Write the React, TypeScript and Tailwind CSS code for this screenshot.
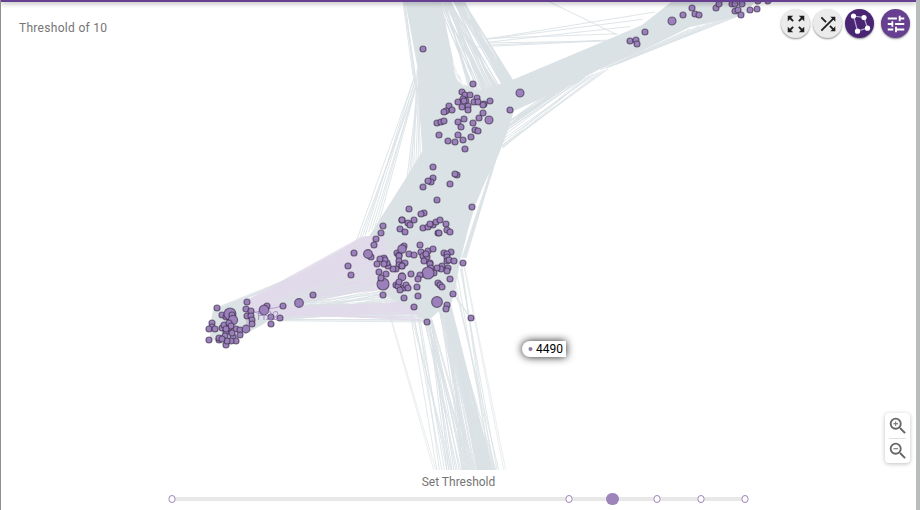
import { useState } from "react";
import type { ReactNode } from "react";
import { MdShuffle, MdTune, MdZoomIn, MdZoomOut, MdZoomOutMap } from "react-icons/md";

type Node = [x: number, y: number, r?: number];
type Point = [x: number, y: number];

interface Bundle {
  from: [Point, Point];
  to: [Point, Point];
  count: number;
  color: string;
  width?: number;
}

const GRAY = "#dbe2e5";
const LILAC = "#e1daea";

const NODES: Node[] = [
  // upper cluster
  [423, 49], [473, 84], [462, 92], [465, 95], [470, 95], [477, 98], [458, 102], [463, 99],
  [466, 101], [474, 102], [478, 102], [484, 104], [483, 105], [490, 101], [468, 106], [462, 107],
  [468, 110], [449, 106], [452, 110], [446, 111], [444, 112], [437, 123], [441, 122], [444, 121],
  [458, 122], [464, 119], [461, 127], [479, 118], [483, 113], [489, 120, 4], [473, 123], [475, 130],
  [478, 131], [439, 135], [448, 141], [455, 142], [458, 135], [463, 140], [471, 137], [465, 149],
  [520, 93, 4], [510, 110], [464, 101],
  // right arm
  [630, 41], [636, 40], [637, 44], [645, 32], [672, 21, 4], [683, 15], [692, 8], [695, 14],
  [699, 15], [716, 8], [719, 4], [732, 4], [735, 4], [742, 4], [735, 11], [738, 10], [741, 15],
  [750, 10], [757, 9], [758, 1], [768, 1],
  // neck
  [433, 167], [457, 175], [455, 174], [433, 178], [431, 182], [428, 181], [423, 187], [450, 184],
  [437, 200], [472, 207], [409, 209], [424, 213], [421, 214], [402, 220], [402, 220], [414, 220],
  [408, 223], [410, 225], [400, 229], [405, 232], [383, 226], [381, 233], [376, 239], [374, 245],
  [423, 228], [428, 227], [433, 225], [430, 224], [436, 222], [440, 220], [446, 224], [447, 230],
  [450, 232], [438, 233], [439, 233],
  // core
  [354, 253], [348, 266], [351, 275], [371, 257], [368, 254, 4.4], [420, 245], [404, 246],
  [397, 253], [399, 255], [402, 249, 4.2], [409, 254], [414, 255], [399, 256], [399, 261],
  [405, 263], [399, 265], [402, 266], [402, 266], [396, 269], [393, 269], [388, 266], [387, 263],
  [384, 258], [385, 260], [380, 259], [384, 264], [377, 264], [379, 272], [386, 274], [383, 284, 6],
  [381, 278], [383, 295], [421, 252], [423, 256], [428, 251], [433, 249], [427, 257], [424, 261],
  [426, 254], [430, 263], [430, 264], [444, 253], [451, 252], [447, 254], [447, 257], [447, 261],
  [449, 260], [454, 261], [463, 263], [448, 268], [442, 266], [441, 269], [437, 268], [447, 271],
  [434, 273], [431, 268], [428, 273, 6], [420, 275], [418, 279], [411, 274], [450, 279],
  [402, 276], [402, 277, 3.8], [396, 285], [398, 286], [399, 282], [404, 288], [400, 290],
  [406, 285], [408, 288], [417, 287], [418, 296], [404, 298], [414, 307], [438, 283], [440, 285],
  [442, 287], [453, 294], [437, 302, 5.4], [447, 305], [446, 309], [427, 322], [471, 318],
  // left cluster
  [217, 308], [247, 302], [222, 315], [226, 317], [230, 314, 6], [232, 315], [233, 320, 4.6],
  [246, 309], [251, 311], [247, 316], [251, 316], [252, 320], [252, 324], [267, 306],
  [264, 310, 4.8], [283, 306], [271, 317], [280, 318], [271, 324], [299, 303, 4.4], [313, 295],
  [212, 323], [212, 327], [209, 329], [215, 329], [209, 340], [219, 340], [219, 338], [222, 328],
  [224, 325], [229, 328], [226, 332], [225, 336], [236, 329], [240, 330], [246, 329, 3.8],
  [240, 335], [233, 337], [236, 341], [231, 341], [226, 345], [227, 341], [232, 333], [222, 339],
  [229, 323], [231, 326], [226, 329],
];

const BUNDLES: Bundle[] = [
  // fan between the upper edge and the upper cluster
  { from: [[436, 0], [448, 0]], to: [[470, 92], [486, 92]], count: 10, color: GRAY, width: 1.2 },
  { from: [[442, 0], [455, 0]], to: [[484, 92], [500, 88]], count: 11, color: GRAY, width: 1.4 },
  { from: [[453, 0], [464, 0]], to: [[502, 84], [513, 81]], count: 16, color: GRAY, width: 1.3 },
  { from: [[401, 0], [405, 0]], to: [[413, 76], [419, 100]], count: 4, color: GRAY },
  { from: [[413, 70], [417, 86]], to: [[356, 242], [378, 225]], count: 8, color: GRAY },
  { from: [[416, 60], [420, 84]], to: [[407, 178], [427, 146]], count: 10, color: GRAY },
  // strands beside the right arm
  { from: [[485, 38], [489, 46]], to: [[655, 12], [605, 41]], count: 5, color: GRAY },
  { from: [[475, 47], [489, 44]], to: [[600, 41], [610, 40]], count: 2, color: GRAY },
  { from: [[545, 0], [546, 0]], to: [[616, 34], [617, 35]], count: 2, color: GRAY, width: 0.6 },
  { from: [[500, 138], [503, 149]], to: [[582, 78], [608, 69]], count: 8, color: GRAY },
  { from: [[506, 122], [500, 135]], to: [[560, 85], [585, 77]], count: 9, color: GRAY, width: 1.2 },
  { from: [[600, 70], [620, 63]], to: [[690, 29], [756, 9]], count: 8, color: GRAY },
  // strands beside the neck
  { from: [[509, 110], [500, 150]], to: [[462, 258], [466, 258]], count: 7, color: GRAY },
  // strands leaving the core downwards
  { from: [[384, 300], [386, 300]], to: [[434, 471], [436, 471]], count: 2, color: GRAY, width: 0.6 },
  { from: [[404, 295], [424, 318]], to: [[437, 471], [452, 471]], count: 7, color: GRAY, width: 0.8 },
  { from: [[418, 305], [432, 320]], to: [[447, 471], [475, 471]], count: 17, color: GRAY },
  { from: [[438, 306], [450, 306]], to: [[462, 471], [496, 471]], count: 36, color: GRAY },
  { from: [[445, 305], [451, 305]], to: [[478, 471], [492, 471]], count: 20, color: GRAY, width: 1.2 },
  { from: [[452, 290], [462, 265]], to: [[490, 471], [499, 471]], count: 6, color: GRAY, width: 0.8 },
  { from: [[463, 263], [464, 263]], to: [[504, 471], [506, 471]], count: 2, color: GRAY, width: 0.6 },
  { from: [[453, 294], [455, 296]], to: [[470, 318], [471, 318]], count: 2, color: GRAY },
  // strands between the left cluster and the core
  { from: [[214, 308], [245, 300]], to: [[300, 276], [330, 262]], count: 6, color: GRAY },
  { from: [[255, 315], [280, 321]], to: [[390, 290], [427, 322]], count: 24, color: GRAY },
  { from: [[250, 300], [270, 305]], to: [[366, 236], [420, 285]], count: 30, color: LILAC, width: 1.2 },
  { from: [[270, 300], [300, 308]], to: [[374, 262], [400, 304]], count: 16, color: GRAY, width: 0.8 },
  { from: [[240, 304], [260, 298]], to: [[362, 237], [374, 236]], count: 10, color: LILAC },
  { from: [[262, 308], [280, 318]], to: [[400, 302], [420, 314]], count: 16, color: LILAC, width: 1.2 },
  { from: [[280, 311], [300, 318]], to: [[410, 317], [427, 321]], count: 4, color: LILAC },
];

const AREAS: { points: string; color: string; opacity?: number }[] = [
  {
    color: GRAY,
    points:
      "405,0 441,0 448,36 454,64 463,84 478,91 512,80 600,43 642,25 670,3 674,0 757,0 741,16 690,27 640,52 600,69 560,90 514,111 506,136 498,156 486,180 475,206 468,230 460,262 455,290 450,308 438,312 427,322 410,311 388,296 372,282 360,262 368,238 406,178 423,150 420,120 418,70",
  },
  {
    color: GRAY,
    points: "213,310 232,302 260,296 285,290 288,308 262,325 238,338 226,346 210,338 211,322",
  },
  { color: LILAC, points: "252,299 318,264 367,236 384,236 388,280 360,292 310,302 264,313 246,311" },
  { color: LILAC, points: "262,311 300,305 400,303 416,307 400,312 330,313 272,317" },
  { color: LILAC, points: "360,238 425,236 436,262 410,292 374,298", opacity: 0.25 },
];

const GAPS: { points: string }[] = [
  { points: "453,69 466,88 457,80" },
  { points: "452,60 460,76 456,74" },
  { points: "456,42 473,80 463,66" },
  { points: "470,70 484,84 476,82" },
  { points: "480,58 494,82 488,80" },
  { points: "483,49 505,81 501,82" },
];

const LAST_STOP = 13;
const STOPS = [0, 9, 10, 11, 12, 13];

function noise(seed: number): number {
  const value = Math.sin(seed * 127.1 + 11.7) * 43758.5453;
  return value - Math.floor(value);
}

function between([a, b]: [Point, Point], t: number): Point {
  return [a[0] + (b[0] - a[0]) * t, a[1] + (b[1] - a[1]) * t];
}

function bundlePath(bundle: Bundle, index: number): string {
  return Array.from({ length: bundle.count }, (_, i) => {
    const start = between(bundle.from, noise(index * 97 + i));
    const end = between(bundle.to, i / Math.max(1, bundle.count - 1));
    return `M${start[0].toFixed(1)} ${start[1].toFixed(1)}L${end[0].toFixed(1)} ${end[1].toFixed(1)}`;
  }).join("");
}

function NetworkGraph() {
  return (
    <svg
      className="absolute inset-0 h-full w-full"
      viewBox="1 2 915 468"
      preserveAspectRatio="xMidYMid slice"
      role="img"
      aria-label="Network graph"
    >
      {AREAS.map((area) => (
        <polygon key={area.points} points={area.points} fill={area.color} opacity={area.opacity} />
      ))}
      {GAPS.map((gap) => (
        <polygon key={gap.points} points={gap.points} fill="#ffffff" opacity="0.7" />
      ))}
      {BUNDLES.map((bundle, index) => (
        <path
          key={index}
          d={bundlePath(bundle, index)}
          stroke={bundle.color}
          strokeWidth={bundle.width ?? 0.9}
          fill="none"
        />
      ))}
      <path
        d="M283 306L247 314M247 309V329M251 311L271 317"
        stroke="#b49fcf"
        strokeWidth="1"
        fill="none"
      />
      <g fill="#9b80bb" stroke="#3c2e4c" strokeOpacity="0.65" strokeWidth="1.2">
        {NODES.map(([x, y, r = 3], index) => (
          <circle key={index} cx={x} cy={y} r={r} />
        ))}
      </g>
      <text x="257" y="320" fontSize="12" fill="#9d84bb" opacity="0.75">
        H22
      </text>
      <g>
        <path
          className="drop-shadow-[0_0_4px_rgba(0,0,0,0.9)]"
          d="M566 341H530a8 8 0 0 0 0 16H566Z"
          fill="#ffffff"
        />
        <circle cx="530.5" cy="349" r="2" fill="#8a7a9c" />
        <text x="536" y="353" fontSize="12" fill="#000000">
          4490
        </text>
      </g>
    </svg>
  );
}

function NodesIcon() {
  return (
    <svg viewBox="0 0 24 24" className="size-6" aria-hidden="true">
      <path d="M5.500 4L16 5.500L19.500 16L9.500 19Z" fill="none" stroke="#b9a8d2" strokeWidth="1.200" />
      <g fill="#ffffff">
        <circle cx="5.500" cy="4" r="2.600" />
        <circle cx="16" cy="5.500" r="2.600" />
        <circle cx="19.500" cy="16.200" r="2.600" />
        <circle cx="9.500" cy="19.200" r="2.600" />
      </g>
    </svg>
  );
}

function RoundButton({ label, tone, children }: { label: string; tone: string; children: ReactNode }) {
  return (
    <button
      type="button"
      aria-label={label}
      className={`flex size-[29px] items-center justify-center rounded-full shadow-[0_1px_2px_rgba(0,0,0,0.45)] ${tone}`}
    >
      {children}
    </button>
  );
}

export default function App() {
  const [threshold, setThreshold] = useState(10);

  return (
    <main className="flex h-screen flex-col overflow-hidden border-r-4 border-l border-r-[#b9bebc] border-l-[#8f8f8f] bg-white font-[Roboto,sans-serif] text-xs text-[#757575]">
      <div className="z-10 h-[2px] shrink-0 bg-[#673f90] shadow-[0_1px_5px_rgba(0,0,0,0.5)]" />

      <section className="relative min-h-0 flex-1 overflow-hidden">
        <NetworkGraph />
        <div className="absolute inset-x-0 top-0 flex items-start justify-between pt-[7px] pr-1.5 pl-[18px]">
          <h1 className="pt-[11px] tracking-wide">Threshold of {threshold}</h1>
          <div className="flex gap-[3px]">
            <RoundButton label="Fit to screen" tone="bg-[#ebebeb] text-[#1f1f1f]">
              <MdZoomOutMap className="size-[22px]" />
            </RoundButton>
            <RoundButton label="Shuffle layout" tone="bg-[#ebebeb] text-[#1f1f1f]">
              <MdShuffle className="size-[22px]" />
            </RoundButton>
            <RoundButton label="Toggle links" tone="mr-1 bg-[#4a2574] text-white">
              <NodesIcon />
            </RoundButton>
            <RoundButton label="Settings" tone="bg-[#673f90] text-white">
              <MdTune className="size-[22px]" />
            </RoundButton>
          </div>
        </div>
        <div className="absolute right-1.5 bottom-[7px] flex flex-col items-center rounded-sm bg-white px-1 pt-px shadow-[0_1px_4px_rgba(0,0,0,0.25)]">
          <button type="button" aria-label="Zoom in" className="flex h-6 w-[17px] items-center justify-center">
            <MdZoomIn className="size-[22px] shrink-0 text-[#666666]" />
          </button>
          <hr className="w-[17px] border-[#e0e0e0]" />
          <button type="button" aria-label="Zoom out" className="flex h-6 w-[17px] items-center justify-center">
            <MdZoomOut className="size-[22px] shrink-0 text-[#666666]" />
          </button>
        </div>
      </section>

      <footer className="flex h-10 shrink-0 flex-col items-center pt-1">
        <label htmlFor="threshold">Set Threshold</label>
        <div className="relative mt-0.5 flex h-3.5 w-[64%] items-center">
          <div className="absolute inset-x-1.5 h-1 bg-[#e8e8e8]">
            {STOPS.map((stop) => (
              <span
                key={stop}
                className="absolute top-1/2 h-2 w-[7px] -translate-x-1/2 -translate-y-1/2 rounded-full border border-[#9d84bb] bg-white"
                style={{ left: `${(stop / LAST_STOP) * 100}%` }}
              />
            ))}
          </div>
          <input
            id="threshold"
            type="range"
            min={0}
            max={LAST_STOP}
            value={threshold}
            onChange={(event) => setThreshold(Number(event.target.value))}
            className="relative h-3 w-full cursor-pointer appearance-none bg-transparent [&::-webkit-slider-thumb]:h-3 [&::-webkit-slider-thumb]:w-[13px] [&::-webkit-slider-thumb]:appearance-none [&::-webkit-slider-thumb]:rounded-full [&::-webkit-slider-thumb]:bg-[#9d84bb]"
          />
        </div>
      </footer>
    </main>
  );
}
